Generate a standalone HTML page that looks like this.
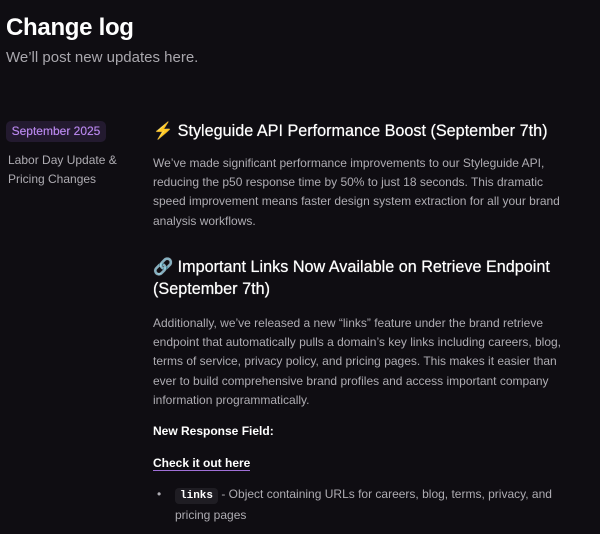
<!DOCTYPE html><html><head><style>
body{margin:0;background:#0f0d12;width:600px;height:534px;overflow:hidden;font-family:"Liberation Sans",sans-serif;color:#fff}
.a{position:absolute;white-space:nowrap}
h1{position:absolute;left:6px;top:14px;margin:0;font-size:24px;font-weight:bold;letter-spacing:-0.3px}
.sub{left:6px;top:49px;font-size:15px;color:#a9a7ad}
.badge{left:6px;top:121px;width:100px;height:21px;background:#231a2f;border-radius:5px;color:#b685ea;font-size:12px;line-height:21px;text-align:center;text-shadow:0 0 0.4px #b685ea}
.side{left:8px;top:151px;font-size:12px;color:#aeacb2;line-height:19px}
h2{position:absolute;left:153px;margin:0;font-size:16.2px;font-weight:normal;line-height:22px;color:#fff;text-shadow:0 0 0.6px #fff}
.p{position:absolute;left:153px;width:420px;font-size:12px;line-height:19.2px;color:#aeacb2}
b{color:#fff;font-size:12px}
code{font-family:"Liberation Mono",monospace;background:#1f1d23;color:#fff;font-size:11px;padding:2px 5px;border-radius:4px;font-weight:bold}
</style></head><body>
<h1>Change log</h1>
<div class="a sub">We’ll post new updates here.</div>
<div class="a badge">September 2025</div>
<div class="a side">Labor Day Update &amp;<br>Pricing Changes</div>
<h2 style="top:120px">⚡ Styleguide API Performance Boost (September 7th)</h2>
<div class="p" style="top:154px">We’ve made significant performance improvements to our Styleguide API, reducing the p50 response time by 50% to just 18 seconds. This dramatic speed improvement means faster design system extraction for all your brand analysis workflows.</div>
<h2 style="top:256px;width:420px">🔗 Important Links Now Available on Retrieve Endpoint (September 7th)</h2>
<div class="p" style="top:314px">Additionally, we’ve released a new “links” feature under the brand retrieve endpoint that automatically pulls a domain’s key links including careers, blog, terms of service, privacy policy, and pricing pages. This makes it easier than ever to build comprehensive brand profiles and access important company information programmatically.</div>
<div class="p" style="top:422px"><b>New Response Field:</b></div>
<div class="p" style="top:454px"><b style="border-bottom:1px solid #a070d8">Check it out here</b></div>
<div class="p" style="top:485px;left:175px;width:400px"><span style="position:absolute;left:-18px;color:#aeacb2">•</span><code>links</code> - Object containing URLs for careers, blog, terms, privacy, and pricing pages</div>
</body></html>
